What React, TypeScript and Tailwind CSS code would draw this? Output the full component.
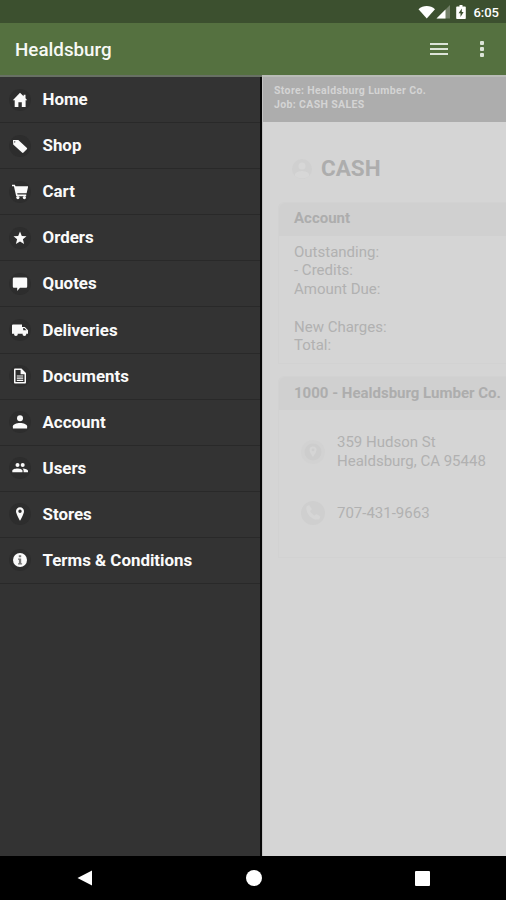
import { ReactNode } from "react";

const Icon = ({ children }: { children: ReactNode }) => (
  <span className="flex h-[22px] w-[22px] shrink-0 items-center justify-center rounded-full bg-[#2d2d2d]">
    <svg
      viewBox="0 0 16 16"
      className="h-4 w-4 fill-[#fafafa]"
      fillRule="evenodd"
    >
      {children}
    </svg>
  </span>
);

const menu: { label: string; icon: ReactNode }[] = [
  {
    label: "Home",
    icon: <path d="M8 .8 11.600 4.300V2.800h1.900v3.500l1.700 2H13.600V15H9.8v-4.700H6.400V15H2.700V8.300H.8z" />,
  },
  {
    label: "Shop",
    icon: <path d="M1 2h5.3l8.4 7.7c.6.5.6 1 .1 1.5l-3.3 3.4c-.5.5-1 .5-1.500 0L1.200 6.400zM2.700 3.300a.6.6 0 1 0 .1 0z" />,
  },
  {
    label: "Cart",
    icon: (
      <>
        <path d="M0 .8h2.900l.6 1.500H16.200l-1.600 7H5.200l.3 1.300h8.700v1.600H4.200L1.900 2.300H0z" />
        <circle cx="5.900" cy="13.600" r="1.600" />
        <circle cx="12.400" cy="13.600" r="1.600" />
      </>
    ),
  },
  {
    label: "Orders",
    icon: <path d="m8 1.500 1.800 4.500 4.700.3-3.600 3 1.200 4.700L8 11.500 3.900 14l1.200-4.700-3.600-3 4.700-.3z" />,
  },
  {
    label: "Quotes",
    icon: <path d="M2.300 1.500h11.400c1 0 1.500.5 1.500 1.500v7.300c0 1-.5 1.500-1.500 1.500H8L5.200 15v-3.200H2.300C1.300 11.800.8 11.300.8 10.300V3c0-1 .5-1.500 1.500-1.500z" />,
  },
  {
    label: "Deliveries",
    icon: (
      <>
        <path d="M0 3.500Q0 2.500 1 2.500h9v2.400h2.800L16 8.200v3.600H0zM11.200 6v2.300h3.300L12.300 6z" />
        <circle cx="3.900" cy="12.100" r="1.900" />
        <circle cx="12.400" cy="12.100" r="1.900" />
      </>
    ),
  },
  {
    label: "Documents",
    icon: <path d="M3.200.5h6.300l4.500 4.500v9.300c0 .8-.4 1.200-1.200 1.200H3.200c-.8 0-1.200-.4-1.200-1.200V1.700C2 .9 2.400.5 3.200.5zm.3 1.400v12.200h9V6.200H8.600V1.900zM4.800 7.400h6.400v1.100H4.800zm0 2.200h6.400v1.100H4.800zm0 2.200h6.400v1.100H4.800z" />,
  },
  {
    label: "Account",
    icon: (
      <>
        <circle cx="8" cy="4.200" r="3" />
        <path d="M.9 14.500v-2.300C.9 10.500 4.500 9 8 9s7.100 1.500 7.100 3.200v2.300z" />
      </>
    ),
  },
  {
    label: "Users",
    icon: (
      <>
        <circle cx="5.500" cy="5.100" r="2" />
        <circle cx="10.700" cy="5.100" r="2" />
        <path d="M.3 12.300v-1.600c0-1.400 2.900-2.300 5.100-2.300s5.100.9 5.100 2.300v1.600zM10.800 8.400c2.500.1 5.200 1 5.200 2.300v1.600h-4.400v-1.600c0-1-.4-1.700-1.100-2.200z" />
      </>
    ),
  },
  {
    label: "Stores",
    icon: <path d="M8 1.200a4 4 0 0 0-4 4.100C4 8 8 14.800 8 14.800s4-6.800 4-9.500a4 4 0 0 0-4-4.100zm0 2.300a1.700 1.700 0 1 1 0 3.400 1.700 1.700 0 0 1 0-3.400z" />,
  },
  {
    label: "Terms & Conditions",
    icon: (
      <>
        <circle cx="8" cy="8" r="7" />
        <path className="fill-[#777]" d="M6.800 3.300h2.400v2H6.800zM6 6.600h3.200v4.700h.9v1.200H6v-1.200h.9V7.800H6z" />
      </>
    ),
  },
];

const StatusBar = () => (
  <div className="flex h-[23px] shrink-0 items-center justify-end bg-[#3c502f] pt-px pr-[7px]">
    <svg viewBox="0 0 50 16" className="mr-[5px] h-4 w-[50px] fill-white">
      <path d="M.5 5.200C5 .8 12.500.8 17 5.200L8.750 14.500z" />
      <path d="M32 1v13.500H18.500z" className="fill-[#738069]" />
      <path d="M27.500 5.500v9h-9z" />
      <path
        fillRule="evenodd"
        d="M41.500 1h3v1.500H47q.8 0 .8.800v10.900q0 .8-.8.800h-8q-.8 0-.8-.8V3.300q0-.8.8-.8h2.500zM43.800 4.500l-3.200 4.800h1.900v3.600L45.600 8h-1.800z"
      />
    </svg>
    <span className="text-[13px] leading-none font-medium text-white">
      6:05
    </span>
  </div>
);

const Toolbar = () => (
  <div className="flex h-[52px] shrink-0 items-center justify-between bg-[#557140] pr-[22px] pl-[15px]">
    <h1 className="pt-[3px] text-[18.800px] font-medium text-[#f7f9f5]">
      Healdsburg
    </h1>
    <div className="flex items-center gap-[32px]">
      <div className="flex w-[18px] flex-col gap-[3px]">
        <span className="h-[2px] bg-[#dce3d8]"></span>
        <span className="h-[2px] bg-[#dce3d8]"></span>
        <span className="h-[2px] bg-[#dce3d8]"></span>
      </div>
      <div className="flex flex-col gap-[2px]">
        <span className="h-[4px] w-[4px] rounded-[1px] bg-[#dce3d8]"></span>
        <span className="h-[4px] w-[4px] rounded-[1px] bg-[#dce3d8]"></span>
        <span className="h-[4px] w-[4px] rounded-[1px] bg-[#dce3d8]"></span>
      </div>
    </div>
  </div>
);

const Drawer = () => (
  <nav className="w-[262px] shrink-0 border-r-2 border-[#080808] bg-[#333]">
    {menu.map((item) => (
      <div
        key={item.label}
        className="flex h-[46.100px] items-center gap-[11.500px] border-b border-[#292929] pl-[9px]"
      >
        <Icon>{item.icon}</Icon>
        <span className="text-[16.900px] leading-none font-bold text-[#fafafa]">
          {item.label}
        </span>
      </div>
    ))}
  </nav>
);

const Content = () => (
  <main className="min-w-0 flex-1 overflow-hidden border-l border-[#c2c2c2] bg-[#d5d5d5] whitespace-nowrap text-[#b1b1b1]">
    <div className="h-[45px] bg-[#adadad] pt-[7px] pl-[11px] text-[10.500px] leading-[14px] font-bold tracking-[0.36px] text-[#d4d4d4]">
      <p>Store: Healdsburg Lumber Co.</p>
      <p>Job: CASH SALES</p>
    </div>

    <div className="flex h-[80px] items-center pt-[14px] pl-[28px]">
      <svg viewBox="0 0 22 22" className="mr-[8px] h-[22px] w-[22px]">
        <circle cx="11" cy="11" r="10" fill="#d0d0d0" />
        <circle cx="11" cy="8" r="3.500" fill="#d7d7d7" />
        <path d="M4 18v-2c2-4 12-4 14 0v2q-7 5-14 0z" fill="#d7d7d7" />
      </svg>
      <h2 className="text-[22.500px] font-bold text-[#adadad]">CASH</h2>
    </div>

    <section className="ml-[15px] h-[162px] rounded-tl-md border border-r-0 border-[#d2d2d2]">
      <h3 className="flex h-[33px] items-center rounded-tl-md bg-[#d0d0d0] pb-[2px] pl-[15px] text-[15px] font-bold text-[#adadad]">
        Account
      </h3>
      <div className="pt-[6.500px] pl-[15px] text-[15px] leading-[18.750px]">
        <p>Outstanding:</p>
        <p>- Credits:</p>
        <p>Amount Due:</p>
        <br />
        <p>New Charges:</p>
        <p>Total:</p>
      </div>
    </section>

    <section className="mt-[12px] ml-[15px] h-[182px] rounded-tl-md border border-r-0 border-[#d2d2d2]">
      <h3 className="flex h-[33px] items-center rounded-tl-md bg-[#d0d0d0] pl-[15px] text-[15px] font-bold text-[#adadad]">
        1000 - Healdsburg Lumber Co.
      </h3>
      <div className="flex items-center pt-[23px] pl-[21px] text-[15px] leading-[19px]">
        <svg viewBox="0 0 26 26" className="mr-[11px] h-[26px] w-[26px]">
          <circle cx="13" cy="13" r="12" fill="#d2d2d2" />
          <circle cx="13" cy="13" r="8.500" fill="#cdcdcd" />
          <path
            fillRule="evenodd"
            d="M13 7.500c-2.500 0-3.500 1.700-3.500 3.300 0 2.700 3.500 7.200 3.500 7.200s3.500-4.500 3.500-7.200c0-1.600-1-3.300-3.500-3.300zm0 2a1.400 1.400 0 1 1 0 2.800 1.400 1.400 0 0 1 0-2.800z"
            fill="#d5d5d5"
          />
        </svg>
        <div>
          <p>359 Hudson St</p>
          <p>Healdsburg, CA 95448</p>
        </div>
      </div>
      <div className="flex items-center pt-[29px] pl-[21px] text-[15px]">
        <svg viewBox="0 0 26 26" className="mr-[11px] h-[26px] w-[26px]">
          <circle cx="13" cy="13" r="12" fill="#cfcfcf" />
          <path
            d="M6.500 6.500 9.200 5l2.600 4.200-1.700 1.800c1 2 2.400 3.400 4.300 4.500l1.900-1.600 4.200 2.500-1.400 3C12.500 21 5.200 13.500 6.500 6.500z"
            fill="#d6d6d6"
          />
        </svg>
        <p>707-431-9663</p>
      </div>
    </section>
  </main>
);

const NavBar = () => (
  <div className="flex h-[44px] shrink-0 items-center justify-between bg-black pr-[76px] pl-[77px]">
    <svg viewBox="0 0 16 16" className="h-4 w-4 fill-white">
      <path d="M15 .5v15L.5 8z" />
    </svg>
    <div className="h-4 w-4 rounded-full bg-white"></div>
    <div className="h-[15px] w-[15px] rounded-[1px] bg-white"></div>
  </div>
);

export default function App() {
  return (
    <div className="flex h-[900px] w-[506px] flex-col overflow-hidden bg-black font-[Roboto,sans-serif]">
      <StatusBar />
      <Toolbar />
      <div className="flex h-[2px] shrink-0">
        <div className="w-[262px] bg-[#687064]"></div>
        <div className="flex-1 bg-[#b9bcb7]"></div>
      </div>
      <div className="flex min-h-0 flex-1">
        <Drawer />
        <Content />
      </div>
      <NavBar />
    </div>
  );
}
